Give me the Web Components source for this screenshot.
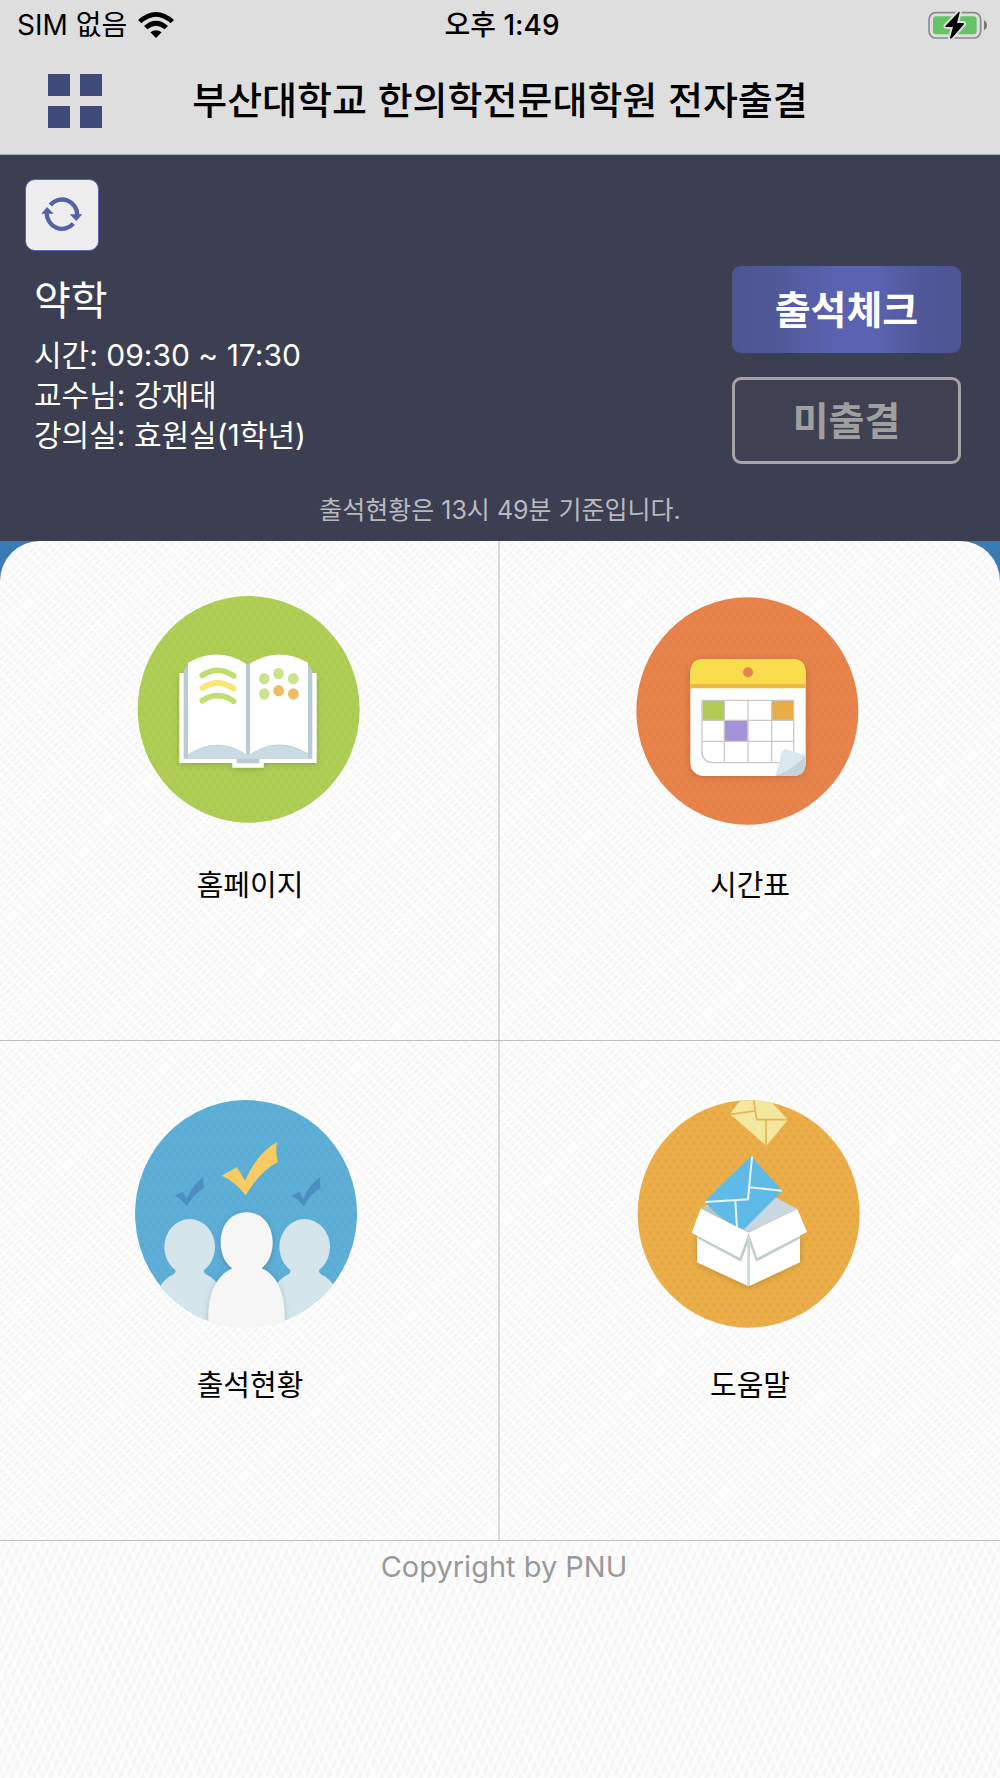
<!DOCTYPE html>
<html lang="ko">
<head>
<meta charset="utf-8">
<meta name="viewport" content="width=device-width, initial-scale=1">
<title>전자출결</title>
<style>
  body {
    margin: 0;
    min-height: 100vh;
    font-family: Inter, "Noto Sans CJK KR", sans-serif;
    color: #000;
    background:
      repeating-linear-gradient(65deg, transparent 0 6px, rgba(255, 255, 255, .7) 6px 9px),
      repeating-linear-gradient(115deg, #fcfcfc 0 4px, #f6f6f6 4px 7px);
  }
</style>
</head>
<body>
<attend-app></attend-app>

<script>
// shared helper: attach an open root with the given markup
function render(elm, html) {
  const template = document.createElement('template');
  template.innerHTML = html;
  elm.attachShadow({mode: 'open'}).appendChild(template.content.cloneNode(true));
}

class StatusBar extends HTMLElement {
  constructor() {
    super();
    render(this, `
      <style>
        :host {
          display: grid;
          grid-template-columns: 1fr auto 1fr;
          align-items: center;
          height: 50px;
          padding: 0 13px 0 17px;
          background: #dedede;
          font-size: 28px;
          line-height: 32px;
        }
        .left { display: flex; align-items: center; gap: 10px; }
        .time { font-weight: 500; }
        .battery { justify-self: end; }
        svg { display: block; }
      </style>
      <div class="left">
        <span>SIM 없음</span>
        <svg width="38" height="28" viewBox="0 0 114 84" aria-hidden="true">
          <path d="M3 27 Q57 -21 111 27 L101 37 Q57 -3 13 37Z"/>
          <path d="M21 45 Q57 13 93 45 L83 55 Q57 33 31 55Z"/>
          <path d="M40 64 Q57 51 74 64 L57 81Z"/>
        </svg>
      </div>
      <span class="time">오후 1:49</span>
      <svg class="battery" width="60" height="28" viewBox="0 0 180 84" aria-hidden="true">
        <rect x="6" y="5" width="155" height="76" rx="20" fill="none" stroke="#8b8b8b" stroke-width="5"/>
        <rect x="18" y="16" width="131" height="54" rx="10" fill="#65c466"/>
        <path d="M171 28 Q180 33 180 43 Q180 53 171 58Z" fill="#777"/>
        <path d="M96 2 L56 44 Q54 48 58 48 L78 48 L69 80 Q70 86 75 81 L111 40 Q113 36 108 36 L90 36 L98 5Z" stroke="#dedede" stroke-width="12"/>
        <path d="M96 2 L56 44 Q54 48 58 48 L78 48 L69 80 Q70 86 75 81 L111 40 Q113 36 108 36 L90 36 L98 5 Q98 0 96 2Z"/>
      </svg>
    `);
  }
}

class NavBar extends HTMLElement {
  constructor() {
    super();
    render(this, `
      <style>
        :host {
          display: grid;
          grid-template-columns: 54px 1fr 54px;
          align-items: start;
          height: 80px;
          padding: 24px 48px 0;
          background: #dedede;
          border-bottom: 1px solid #a9adae;
        }
        button {
          display: grid;
          grid-template-columns: 22px 22px;
          gap: 10px;
          padding: 0;
          border: 0;
          background: none;
        }
        i { height: 22px; background: #404a78; }
        h1 {
          margin: 0;
          font: 500 38px/48px "Noto Sans CJK KR", sans-serif;
          text-align: center;
          white-space: nowrap;
        }
      </style>
      <button type="button" aria-label="메뉴"><i></i><i></i><i></i><i></i></button>
      <h1><slot></slot></h1>
    `);
  }
}

class LecturePanel extends HTMLElement {
  constructor() {
    super();
    render(this, `
      <style>
        :host {
          display: block;
          padding: 24px 39px 11px 25px;
          background: #3b3f51;
          color: #fff;
        }
        button { font-family: inherit; padding: 0; box-sizing: border-box; }
        .refresh {
          display: grid;
          place-items: center;
          width: 74px;
          height: 72px;
          border: 1px solid #5b63b4;
          border-radius: 10px;
          background: #eee;
        }
        .row {
          display: flex;
          justify-content: space-between;
          margin-top: 15px;
          padding-left: 9px;
        }
        h2 { margin: 0; font-size: 40px; font-weight: 400; line-height: 69px; }
        ul { margin: 0; padding: 0; list-style: none; font-size: 30px; line-height: 40px; }
        .actions { display: flex; flex-direction: column; gap: 24px; width: 229px; }
        .actions button {
          height: 87px;
          padding-bottom: 6px;
          border-radius: 9px;
          font-size: 39px;
          font-weight: 700;
        }
        .check {
          border: 0;
          color: #fff;
          background: linear-gradient(90deg, #4d5590, #515897 20%, #5b62b1 45%, #5b62b1 62%, #51589a 82%, #4d5492);
        }
        .state { border: 3px solid #a6a4a1; color: #9f9f9f; background: #3f4051; }
        .note {
          margin: 26px 0 0;
          padding-left: 14px;
          font-size: 25px;
          line-height: 40px;
          text-align: center;
          color: #b9bac0;
        }
      </style>
      <button class="refresh" type="button" aria-label="새로고침">
        <svg width="42" height="36" viewBox="0 0 126 108" fill="#5760ab" aria-hidden="true">
          <path d="M28 24 A46 47 0 0 1 109 55" fill="none" stroke="#5760ab" stroke-width="13"/>
          <path d="M97 80 A46 47 0 0 1 17 48" fill="none" stroke="#5760ab" stroke-width="13"/>
          <path d="M86 52 L124 52 L106 72Z"/>
          <path d="M1 50 L38 50 L18 30Z"/>
        </svg>
      </button>
      <div class="row">
        <div>
          <h2>약학</h2>
          <ul>
            <li>시간: 09:30 ~ 17:30</li>
            <li>교수님: 강재태</li>
            <li>강의실: 효원실(1학년)</li>
          </ul>
        </div>
        <div class="actions">
          <button class="check" type="button">출석체크</button>
          <button class="state" type="button">미출결</button>
        </div>
      </div>
      <p class="note">출석현황은 13시 49분 기준입니다.</p>
    `);
  }
}

// artwork of the four tiles, all on a 780 x 780 canvas
const icons = {
  book: `
    <ellipse cx="386" cy="388" rx="333" ry="340" fill="#aecf55"/>
    <ellipse cx="386" cy="388" rx="333" ry="340" fill="url(#weave)"/>
    <g filter="url(#soft)">
      <path d="M178 279 H590 V549 H431 V563 H337 V549 H178Z" fill="#fff"/>
    </g>
    <path d="M191 279 Q191 265 205 252 H562 Q577 265 577 279 V536 H418 V550 H350 V536 H191Z" fill="#b9cbd3"/>
    <path d="M204 522 Q290 470 378 522 H390 Q475 470 564 522 L564 536 H204Z" fill="#c9dbe3"/>
    <path d="M204 248 Q294 197 378 251 V522 Q294 466 204 522Z" fill="#fff"/>
    <path d="M390 251 Q474 197 564 248 V520 Q474 466 390 522Z" fill="#fff"/>
    <g fill="none" stroke-width="17" stroke-linecap="round">
      <path d="M247 286 Q294 255 341 288" stroke="#c0dd70"/>
      <path d="M247 324 Q294 293 341 326" stroke="#fce570"/>
      <path d="M247 362 Q294 331 341 364" stroke="#c0dd70"/>
    </g>
    <g fill="#cbe38b">
      <ellipse cx="433" cy="296" rx="16" ry="17"/>
      <ellipse cx="476" cy="281" rx="16" ry="17"/>
      <ellipse cx="520" cy="296" rx="16" ry="17"/>
      <ellipse cx="433" cy="342" rx="16" ry="17"/>
    </g>
    <g fill="#f0bb63">
      <ellipse cx="476" cy="332" rx="16" ry="17"/>
      <ellipse cx="520" cy="342" rx="16" ry="17"/>
    </g>`,
  calendar: `
    <ellipse cx="382" cy="393" rx="333" ry="341" fill="#e8834b"/>
    <ellipse cx="382" cy="393" rx="333" ry="341" fill="url(#weave)"/>
    <rect x="211" y="237" width="346" height="351" rx="40" fill="#fff" filter="url(#soft)"/>
    <path d="M211 324 V277 Q211 237 251 237 H517 Q557 237 557 277 V324Z" fill="#f9dd4c"/>
    <path d="M211 312 H557 V325 H211Z" fill="#ecb942"/>
    <circle cx="384" cy="277" r="15" fill="#e8834b"/>
    <path d="M247 362 H313 V420 H247Z" fill="#aecb55"/>
    <path d="M455 362 H521 V420 H455Z" fill="#e8ac48"/>
    <path d="M315 422 H383 V484 H315Z" fill="#a692da"/>
    <path d="M246 361 H521 V548 H278 Q246 546 246 514Z M246 421 H521 M246 484 H521 M313 361 V548 M384 361 V548 M455 361 V548" fill="none" stroke="#c9c9c9" stroke-width="4"/>
    <path d="M466 588 L486 516 Q490 505 502 509 L557 526 V548 Q557 588 517 588Z" fill="#d9e7ee"/>
    <path d="M466 588 Q525 565 557 526 V548 Q557 588 517 588Z" fill="#c5d3da"/>`,
  people: `
    <clipPath id="round"><ellipse cx="378" cy="402" rx="333" ry="341"/></clipPath>
    <path d="M265 722 A333 341 0 1 1 494 721Z" fill="#5bafd9"/>
    <ellipse cx="378" cy="402" rx="333" ry="341" fill="url(#weave)"/>
    <g clip-path="url(#round)">
      <g fill="#d4e5ec">
        <ellipse cx="209" cy="501" rx="76" ry="84"/>
        <path d="M168 560 Q169 578 160 583 Q108 608 98 690 V760 H320 V690 Q310 608 258 583 Q250 578 250 560Z"/>
        <ellipse cx="554" cy="501" rx="76" ry="84"/>
        <path d="M513 560 Q514 578 505 583 Q453 608 443 690 V760 H665 V690 Q655 608 603 583 Q595 578 595 560Z"/>
      </g>
      <g fill="#f6f6f6" filter="url(#soft)">
        <path d="M380 397 C430 397 458 440 458 487 C458 525 443 551 425 565 C470 585 494 635 494 715 V760 H265 V715 C265 635 292 585 337 565 C317 551 302 525 302 487 C302 440 330 397 380 397Z"/>
      </g>
    </g>
    <path d="M305 287 L351 261 L375 302 Q412 219 471 186 Q465 218 474 246 Q420 273 377 346 Q345 304 305 287Z" fill="#f8cc63"/>
    <path d="M164 347 L188 335 L200 356 Q220 311 250 292 Q248 309 252 324 Q222 339 201 379 Q184 355 164 347Z" fill="#4a8fc0"/>
    <path d="M514 347 L538 335 L550 356 Q570 311 600 292 Q598 309 602 324 Q572 339 551 379 Q534 355 514 347Z" fill="#4a8fc0"/>`,
  box: `
    <clipPath id="round"><ellipse cx="386" cy="402" rx="333" ry="341"/></clipPath>
    <ellipse cx="386" cy="402" rx="333" ry="341" fill="#ebae48"/>
    <ellipse cx="386" cy="402" rx="333" ry="341" fill="url(#weave)"/>
    <g clip-path="url(#round)">
      <path d="M330 102 L372 46 L440 50 L504 119 L439 197Z" fill="#f4e79e"/>
      <path d="M330 103 L404 93 M400 55 L410 119 H504 M438 119 V197" fill="none" stroke="#e7b552" stroke-width="5"/>
    </g>
    <path d="M242 386 L386 310 L532 387 L386 458Z" fill="#c9d7de"/>
    <path d="M242 386 L275 371 L340 435Z" fill="#b9c4c6"/>
    <path d="M393 229 L487 332 L372 448 L350 442 Q290 410 254 364Z" fill="#60bae8"/>
    <path d="M396 230 L384 358 L256 366 M388 322 L486 332 M346 362 L351 445" fill="none" stroke="#e5f6fc" stroke-width="6"/>
    <g filter="url(#soft)">
      <path d="M231 460 L386 458 L540 460 V547 L386 619 L231 547Z" fill="#fff"/>
    </g>
    <path d="M231 469 L361 539 L386 470 L411 539 L540 471" fill="none" stroke="#c0cfce" stroke-width="9"/>
    <path d="M386 465 V618" stroke="#ccd7d7" stroke-width="8"/>
    <path d="M242 386 L386 458 L359 533 L215 458Z" fill="#fff"/>
    <path d="M532 387 L386 458 L412 533 L561 456Z" fill="#fff"/>`
};

class MenuTile extends HTMLElement {
  constructor() {
    super();
    render(this, `
      <style>
        :host { display: block; }
        a {
          display: flex;
          flex-direction: column;
          align-items: center;
          gap: 24px;
          padding: 39px 0 132px;
          font-size: 29px;
          line-height: 44px;
          color: #000;
          text-decoration: none;
        }
        svg { display: block; }
      </style>
      <a href="#">
        <svg width="260" height="260" viewBox="0 0 780 780" aria-hidden="true">
          <filter id="soft"><feDropShadow dx="0" dy="4" stdDeviation="9" flood-opacity=".18"/></filter>
          <pattern id="weave" width="24" height="36" patternUnits="userSpaceOnUse">
            <path d="M6 0 L14 9 L6 18 L-2 9Z M18 18 L26 27 L18 36 L10 27Z" fill="#a05a28" opacity=".06"/>
          </pattern>
          ${icons[this.getAttribute('icon')]}
        </svg>
        <slot></slot>
      </a>
    `);
  }
}

class MenuGrid extends HTMLElement {
  constructor() {
    super();
    render(this, `
      <style>
        :host { display: block; background: #3a7ab5; }
        .grid {
          display: grid;
          grid-template-columns: 1fr 1fr;
          border-radius: 40px 40px 0 0;
          background:
            repeating-linear-gradient(45deg, transparent 0 5px, rgba(255, 255, 255, .7) 5px 8px),
            repeating-linear-gradient(135deg, #fcfcfc 0 3px, #f5f5f5 3px 5px);
        }
        ::slotted(*) { border-bottom: 1px solid #c0c0c0; }
        ::slotted(:nth-child(odd)) { box-shadow: inset -2px 0 #dadada; }
      </style>
      <div class="grid"><slot></slot></div>
    `);
  }
}

class AttendApp extends HTMLElement {
  constructor() {
    super();
    render(this, `
      <style>
        :host { display: block; }
        footer {
          padding-left: 8px;
          font-size: 29px;
          line-height: 52px;
          text-align: center;
          color: #999;
        }
      </style>
      <header>
        <status-bar></status-bar>
        <nav-bar>부산대학교 한의학전문대학원 전자출결</nav-bar>
      </header>
      <main>
        <lecture-panel></lecture-panel>
        <menu-grid>
          <menu-tile icon="book">홈페이지</menu-tile>
          <menu-tile icon="calendar">시간표</menu-tile>
          <menu-tile icon="people">출석현황</menu-tile>
          <menu-tile icon="box">도움말</menu-tile>
        </menu-grid>
      </main>
      <footer>Copyright by PNU</footer>
    `);
  }
}

customElements.define('status-bar', StatusBar);
customElements.define('nav-bar', NavBar);
customElements.define('lecture-panel', LecturePanel);
customElements.define('menu-tile', MenuTile);
customElements.define('menu-grid', MenuGrid);
customElements.define('attend-app', AttendApp);
</script>
</body>
</html>
